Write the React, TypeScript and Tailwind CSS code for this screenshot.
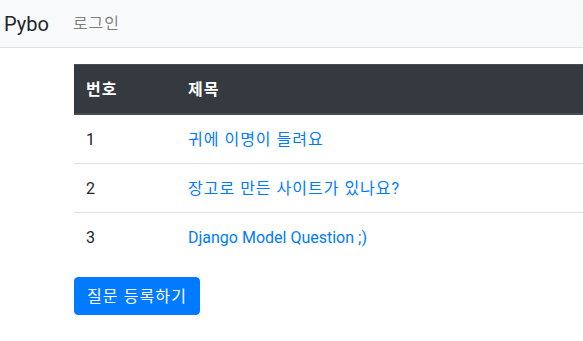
export default function App() {
  const questions = [
    { id: 1, subject: "귀에 이명이 들려요" },
    { id: 2, subject: "장고로 만든 사이트가 있나요?" },
    { id: 3, subject: "Django Model Question ;)" },
  ];

  const isKorean = (s: string) => /[가-힣]/.test(s);

  return (
    <div
      className="min-h-screen overflow-hidden bg-white text-[#212529]"
      style={{ fontFamily: 'Roboto, "Noto Sans CJK KR", sans-serif' }}
    >
      {/* Navbar */}
      <nav className="flex h-[48px] items-center border-b border-[#dee2e6] bg-[#f8f9fa] pl-[4px]">
        <a className="mr-[16px] text-[20px] leading-[30px] text-[#212529]">Pybo</a>
        <a className="px-[8px] text-[16px] leading-[24px] tracking-[1px] text-[rgba(0,0,0,0.5)]">로그인</a>
      </nav>

      <div className="mt-[16px] pl-[74px]">
        <table className="w-[620px] border-collapse text-[16px] leading-[24px]">
          <thead>
            <tr className="bg-[#343a40] text-white">
              <th className="w-[102px] border-t border-b-2 border-[#454d55] px-[12px] pt-[13px] pb-[11px] text-left font-bold tracking-[1px]">번호</th>
              <th className="border-t border-b-2 border-[#454d55] px-[12px] pt-[13px] pb-[11px] text-left font-bold tracking-[1px]">제목</th>
            </tr>
          </thead>
          <tbody>
            {questions.map((q, i) => (
              <tr key={q.id} className={i > 0 ? "border-t border-[#dee2e6]" : ""}>
                <td className="px-[12px] pt-[13px] pb-[11px]">{q.id}</td>
                <td className="px-[12px] pt-[13px] pb-[11px]">
                  <a className={isKorean(q.subject) ? "tracking-[1px] text-[#007bff]" : "text-[#007bff]"}>
                    {q.subject}
                  </a>
                </td>
              </tr>
            ))}
          </tbody>
        </table>

        <button className="mt-[16px] rounded-[4px] border border-[#007bff] bg-[#007bff] px-[12px] pt-[7px] pb-[5px] text-[16px] leading-[24px] tracking-[1.1px] text-white">
          질문 등록하기
        </button>
      </div>
    </div>
  );
}
